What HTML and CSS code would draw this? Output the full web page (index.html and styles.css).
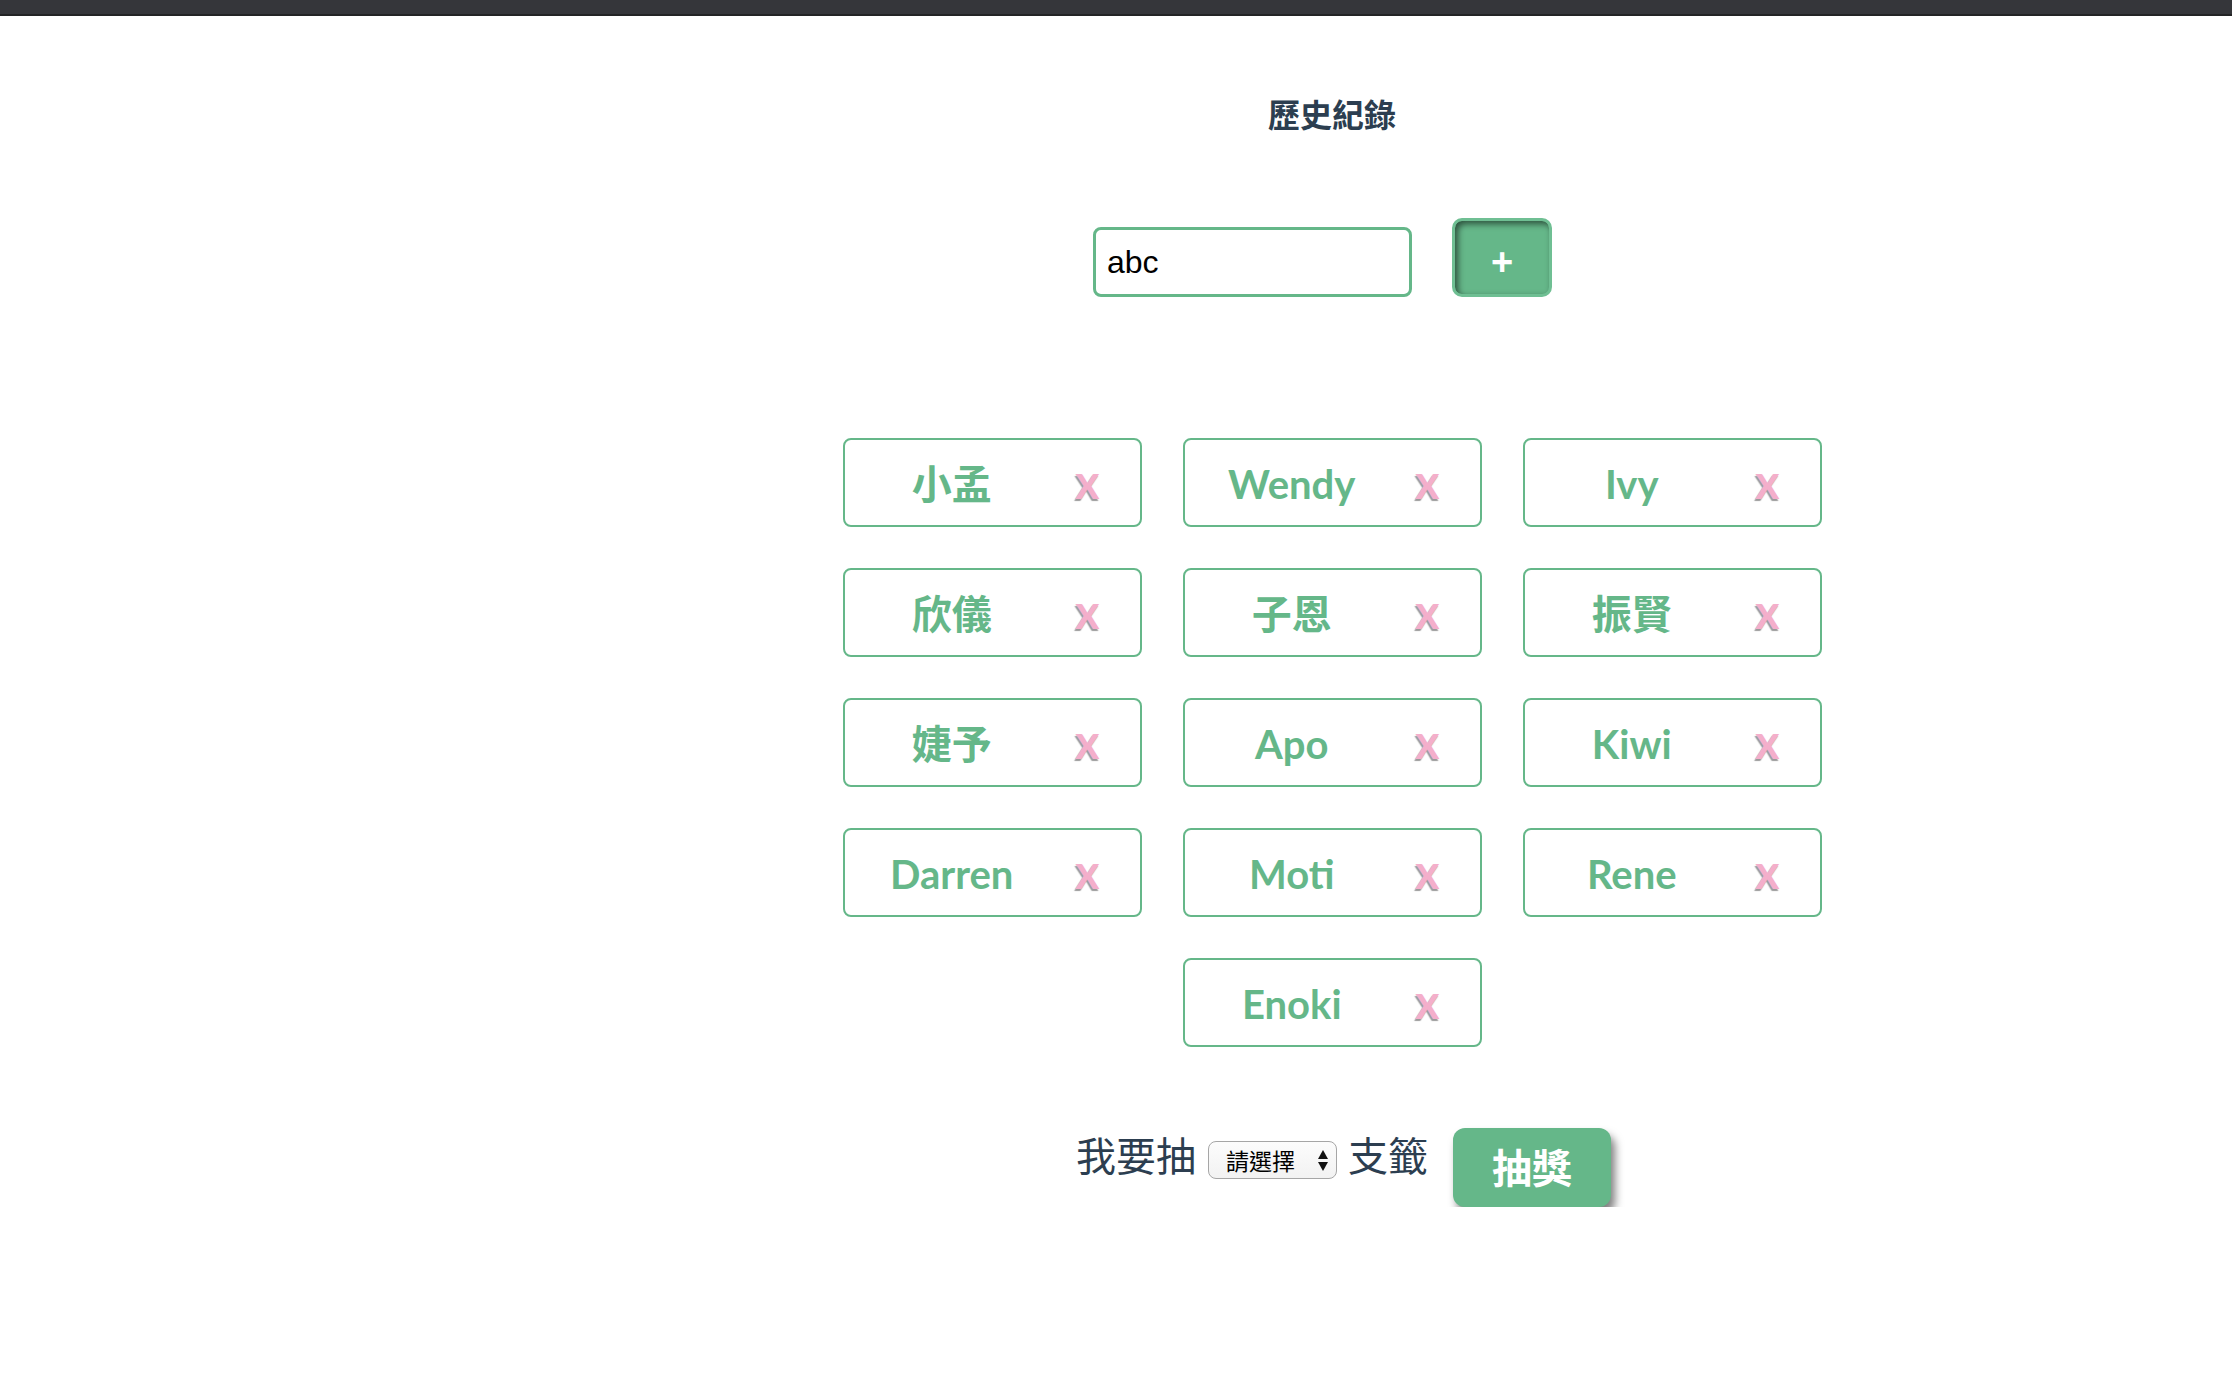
FILE: index.html
```html
<!DOCTYPE html>
<html lang="zh-Hant">
<head>
<meta charset="utf-8">
<title>抽籤</title>
<link rel="stylesheet" href="styles.css">
</head>
<body>
<div class="topbar"></div>
<div class="page">
  <aside class="side"></aside>
  <main class="main">
    <h1 class="title">歷史紀錄</h1>
    <div class="add-row">
      <input class="name-input" type="text" value="abc">
      <button class="add-btn">+</button>
    </div>
    <ul class="cards">
      <li class="card"><span class="name">小孟</span><span class="del">x</span></li>
      <li class="card"><span class="name">Wendy</span><span class="del">x</span></li>
      <li class="card"><span class="name">Ivy</span><span class="del">x</span></li>
      <li class="card"><span class="name">欣儀</span><span class="del">x</span></li>
      <li class="card"><span class="name">子恩</span><span class="del">x</span></li>
      <li class="card"><span class="name">振賢</span><span class="del">x</span></li>
      <li class="card"><span class="name">婕予</span><span class="del">x</span></li>
      <li class="card"><span class="name">Apo</span><span class="del">x</span></li>
      <li class="card"><span class="name">Kiwi</span><span class="del">x</span></li>
      <li class="card"><span class="name">Darren</span><span class="del">x</span></li>
      <li class="card"><span class="name">Moti</span><span class="del">x</span></li>
      <li class="card"><span class="name">Rene</span><span class="del">x</span></li>
      <li class="card"><span class="name">Enoki</span><span class="del">x</span></li>
    </ul>
    <div class="draw-row">
      <span class="label">我要抽</span>
      <span class="select-wrap">
        <select class="count"><option>請選擇</option><option>1</option><option>2</option><option>3</option></select>
        <span class="arrows"></span>
      </span>
      <span class="label label-2">支籤</span>
      <button class="draw-btn">抽獎</button>
    </div>
  </main>
</div>
</body>
</html>
```

FILE: styles.css
```css
html, body {
  margin: 0;
  padding: 0;
  background: #ffffff;
}

body {
  font-family: Lato, "Noto Sans CJK TC", sans-serif;
  color: #2c3e50;
}

.topbar {
  height: 14px;
  background: #35363a;
  border-bottom: 2px solid #232425;
}

.page {
  display: flex;
}

.side {
  flex: 0 0 432px;
}

.main {
  flex: 1;
  display: flex;
  flex-direction: column;
  align-items: center;
}

.title {
  margin: 79px 0 0 0;
  font-size: 32px;
  line-height: 40px;
  height: 40px;
  font-weight: 700;
  color: #2c3e50;
}

.add-row {
  margin-top: 83px;
  display: flex;
  align-items: flex-end;
  padding-right: 19px;
}

.name-input {
  box-sizing: border-box;
  width: 319px;
  height: 70px;
  border: 3.5px solid #65b789;
  border-radius: 8px;
  padding: 0 11px;
  font-family: "Liberation Sans", Arial, sans-serif;
  font-size: 32px;
  color: #000;
  outline: none;
  background: #fff;
}

.add-btn {
  box-sizing: border-box;
  margin-left: 40px;
  width: 100px;
  height: 79px;
  border: 3px solid #6fbf93;
  border-radius: 10px;
  background: #65b789;
  box-shadow: inset 3px 3px 6px rgba(0, 0, 0, 0.55);
  color: #fff;
  font-family: "Liberation Sans", Arial, sans-serif;
  font-weight: 700;
  font-size: 38px;
  line-height: 1;
  padding: 8px 0 0 0;
  cursor: pointer;
}

.cards {
  list-style: none;
  margin: 141px 0 0 0;
  padding: 0;
  width: 979px;
  display: flex;
  flex-wrap: wrap;
  justify-content: center;
  gap: 41px;
}

.card {
  box-sizing: border-box;
  width: 299px;
  height: 89px;
  border: 2px solid #65b789;
  border-radius: 8px;
  display: flex;
  align-items: baseline;
  padding: 13px 40px 0 0;
}

.name {
  flex: 1;
  text-align: center;
  font-size: 40px;
  line-height: 1.2;
  font-weight: 700;
  color: #65b789;
}

.del {
  margin-left: 16px;
  font-size: 47px;
  line-height: 1.2;
  font-weight: 700;
  color: #f4afcb;
  text-shadow: -1px 2px 1px #9b9b9b;
  cursor: pointer;
}

.draw-row {
  margin-top: 81px;
  display: flex;
  align-items: flex-start;
  padding-left: 23px;
}

.label {
  margin-top: 4px;
  font-size: 40px;
  line-height: 48px;
  font-weight: 400;
  color: #2c3e50;
}

.label-2 {
  margin-left: 11px;
}

.select-wrap {
  position: relative;
  margin-top: 13px;
  margin-left: 12px;
  display: block;
  width: 129px;
  height: 38px;
}

.count {
  box-sizing: border-box;
  appearance: none;
  -webkit-appearance: none;
  width: 129px;
  height: 38px;
  border: 1.5px solid #a6a6a6;
  border-radius: 8px;
  background: linear-gradient(#fcfcfc, #f2f2f2);
  padding: 0 0 0 17px;
  font-family: "Noto Sans CJK TC", sans-serif;
  font-size: 23px;
  line-height: 34px;
  color: #000;
  outline: none;
}

.arrows {
  position: absolute;
  right: 9px;
  top: 9px;
  width: 10px;
  height: 21px;
  pointer-events: none;
}

.arrows::before,
.arrows::after {
  content: "";
  position: absolute;
  left: 0;
  border-left: 5px solid transparent;
  border-right: 5px solid transparent;
}

.arrows::before {
  top: 0;
  border-bottom: 9px solid #111;
}

.arrows::after {
  bottom: 0;
  border-top: 9px solid #111;
}

.draw-btn {
  margin-left: 25px;
  width: 158px;
  height: 79px;
  border: none;
  border-radius: 12px;
  background: #65b789;
  color: #fff;
  font-family: Lato, "Noto Sans CJK TC", sans-serif;
  font-weight: 700;
  font-size: 40px;
  line-height: 1;
  padding: 0;
  box-shadow: 4px 7px 9px rgba(0, 0, 0, 0.5);
  cursor: pointer;
}
```
